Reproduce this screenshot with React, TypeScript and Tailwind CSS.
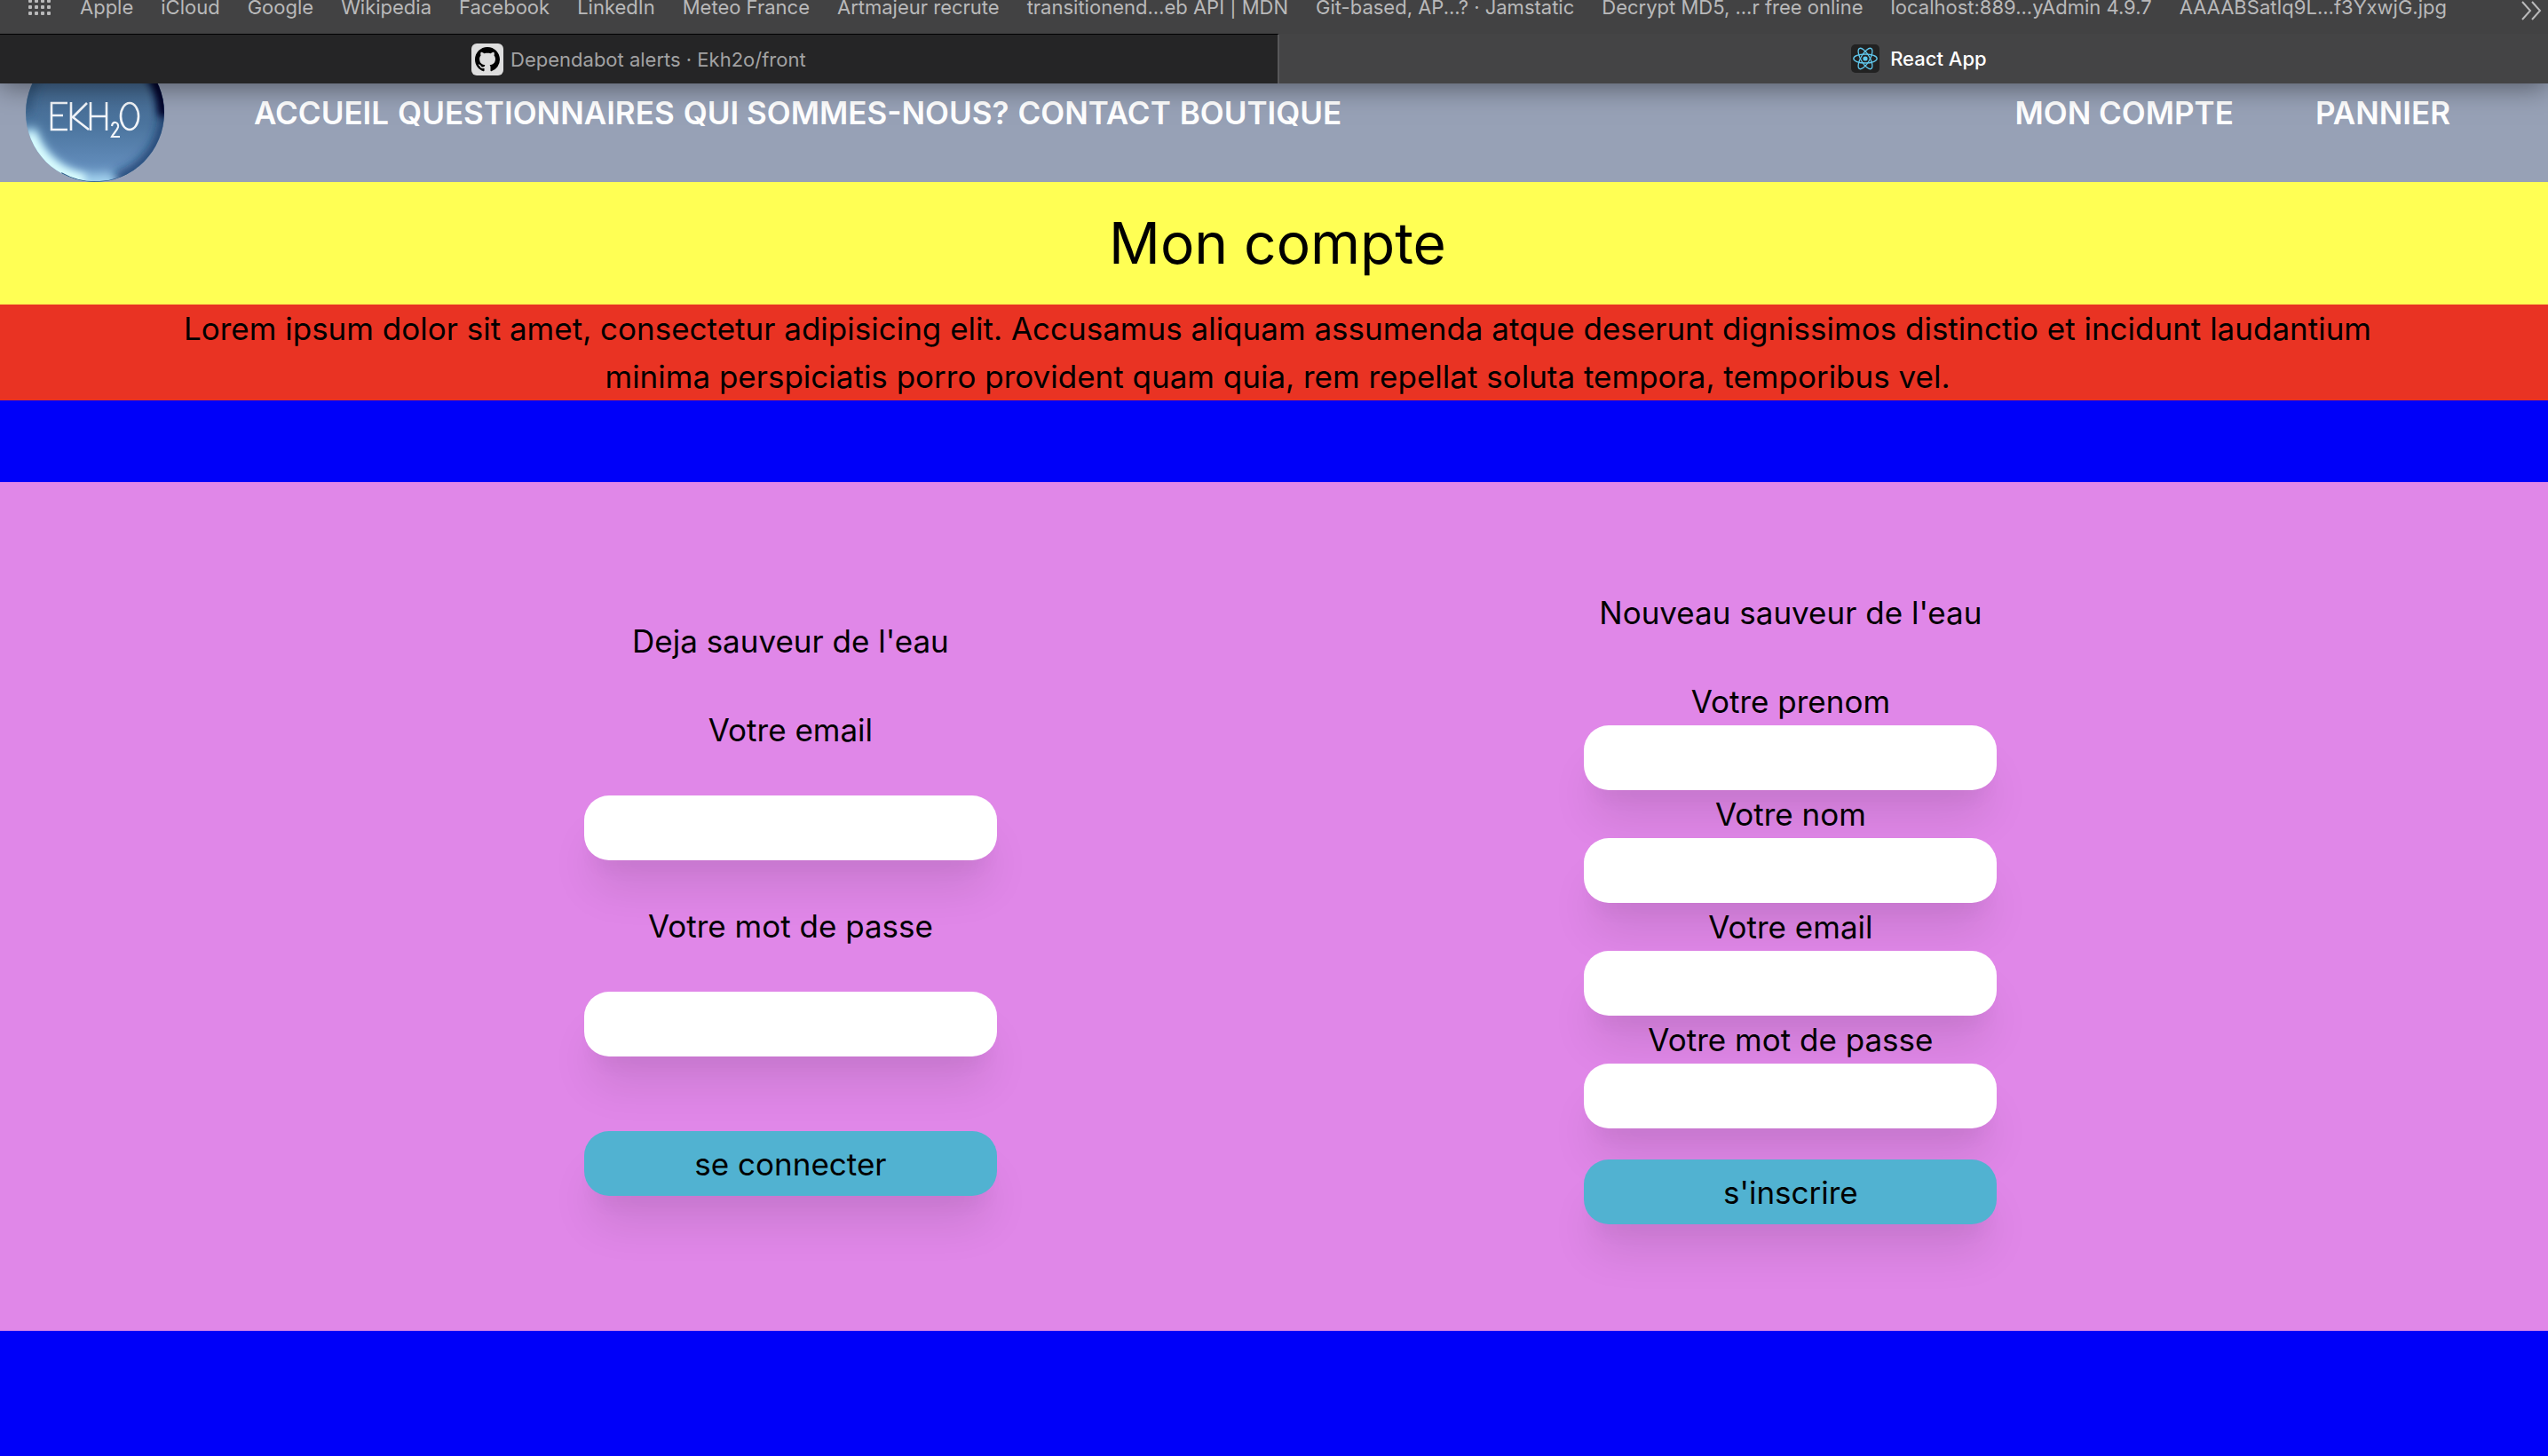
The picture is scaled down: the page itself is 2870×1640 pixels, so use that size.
import React from "react";

const bookmarks = [
  "Apple",
  "iCloud",
  "Google",
  "Wikipedia",
  "Facebook",
  "LinkedIn",
  "Meteo France",
  "Artmajeur recrute",
  "transitionend...eb API | MDN",
  "Git-based, AP...? · Jamstatic",
  "Decrypt MD5, ...r free online",
  "localhost:889...yAdmin 4.9.7",
  "AAAABSatIq9L...f3YxwjG.jpg",
];

const navLinks = ["ACCUEIL", "QUESTIONNAIRES", "QUI SOMMES-NOUS?", "CONTACT", "BOUTIQUE"];

const box =
  "h-[73px] w-full rounded-[28px] text-center shadow-[0_40px_50px_-10px_rgba(0,0,0,0.1),0_20px_20px_-10px_rgba(0,0,0,0.04)]";

function GridIcon() {
  const steps = [0, 7, 14, 21];
  return (
    <svg viewBox="0 0 26 26" className="size-[26px]" fill="#b9b9ba" aria-hidden="true">
      {steps.map((y) => steps.map((x) => <rect key={`${x}-${y}`} x={x} y={y} width="4" height="4" rx="1" />))}
    </svg>
  );
}

function GithubIcon() {
  return (
    <span className="flex size-9 items-center justify-center rounded-md bg-[#dedede]">
      <svg viewBox="0 0 16 16" className="size-7" fill="#000" aria-hidden="true">
        <path d="M8 0C3.58 0 0 3.58 0 8c0 3.54 2.29 6.53 5.47 7.59.4.07.55-.17.55-.38 0-.19-.01-.82-.01-1.49-2.01.37-2.53-.49-2.69-.94-.09-.23-.48-.94-.82-1.13-.28-.15-.68-.52-.01-.53.63-.01 1.08.58 1.23.82.72 1.21 1.87.87 2.33.66.07-.52.28-.87.51-1.07-1.78-.2-3.64-.89-3.64-3.95 0-.87.31-1.59.82-2.15-.08-.2-.36-1.02.08-2.12 0 0 .67-.21 2.2.82.64-.18 1.32-.27 2-.27s1.36.09 2 .27c1.53-1.04 2.2-.82 2.2-.82.44 1.1.16 1.92.08 2.12.51.56.82 1.27.82 2.15 0 3.07-1.87 3.75-3.65 3.95.29.25.54.73.54 1.48 0 1.07-.01 1.93-.01 2.2 0 .21.15.46.55.38A8.01 8.01 0 0 0 16 8c0-4.42-3.58-8-8-8z" />
      </svg>
    </span>
  );
}

function ReactIcon() {
  return (
    <span className="flex size-8 items-center justify-center rounded-[5px] bg-[#222222]">
      <svg viewBox="-14 -14 28 28" className="size-7" fill="none" stroke="#61c9ee" strokeWidth="1.3" aria-hidden="true">
        <circle r="2.6" fill="#61c9ee" stroke="none" />
        <ellipse rx="13.2" ry="5" />
        <ellipse rx="13.2" ry="5" transform="rotate(60)" />
        <ellipse rx="13.2" ry="5" transform="rotate(120)" />
      </svg>
    </span>
  );
}

function Logo() {
  return (
    <svg viewBox="0 0 156 156" className="size-[156px] shrink-0" role="img" aria-label="EKH2O">
      <defs>
        <clipPath id="drop">
          <circle cx="78" cy="78" r="78" />
        </clipPath>
        <linearGradient id="water" x1="0" y1="0" x2="0" y2="1">
          <stop offset="0.3" stopColor="#456a92" />
          <stop offset="0.6" stopColor="#4c759f" />
          <stop offset="1" stopColor="#6b96c6" />
        </linearGradient>
        <filter id="soft" x="-50%" y="-50%" width="200%" height="200%">
          <feGaussianBlur stdDeviation="6" />
        </filter>
        <filter id="softer" x="-50%" y="-50%" width="200%" height="200%">
          <feGaussianBlur stdDeviation="4" />
        </filter>
      </defs>
      <g clipPath="url(#drop)">
        <rect width="156" height="156" fill="url(#water)" />
        <path d="M0 78A78 78 0 0 1 40 10" fill="none" stroke="#2f5279" strokeWidth="10" filter="url(#soft)" />
        <path d="M134 20A80 80 0 0 1 100 153" fill="none" stroke="#123665" strokeWidth="10" filter="url(#soft)" />
        <path d="M130 20A80 80 0 0 1 156 82" fill="none" stroke="#020028" strokeWidth="15" filter="url(#softer)" />
        <path d="M2 96A78 78 0 0 0 100 154" fill="none" stroke="#a4d4ef" strokeWidth="20" filter="url(#soft)" />
        <path d="M4 102A78 78 0 0 0 66 154" fill="none" stroke="#dcffff" strokeWidth="13" filter="url(#softer)" />
        <path d="M40 146A78 78 0 0 0 125 141" fill="none" stroke="#24507e" strokeWidth="2" />
      </g>
      <g fill="none" stroke="#f2f5f9" strokeWidth="2.6">
        <path d="M47 67H29V97H47M29 81H42" />
        <path d="M51 66V98M69 67L53 83L71 97" />
        <path d="M73 66V98M91 66V98M73 82H91" />
        <ellipse cx="117" cy="82" rx="10" ry="15" />
        <path d="M97 93C98 87 105 88 104 94C103 98 99 101 97 105H106" strokeWidth="2.2" />
      </g>
    </svg>
  );
}

function BrowserChrome() {
  return (
    <div className="relative z-10 bg-[#444445] shadow-[0_2px_30px_rgba(0,0,0,0.5)]">
      <div className="flex h-[38px] items-start overflow-hidden bg-[#424243] pl-8 pr-1.5 text-[22px] leading-8 text-[#b9b9ba]">
        <div className="-mt-2 flex flex-1 items-start whitespace-nowrap">
          <button type="button" aria-label="Favoris" className="mr-8">
            <GridIcon />
          </button>
          <nav aria-label="Favoris" className="flex gap-[31px]">
            {bookmarks.map((name) => (
              <a key={name} href="#">
                {name}
              </a>
            ))}
          </nav>
        </div>
        <button type="button" aria-label="Plus de favoris">
          <svg viewBox="0 0 24 24" className="size-6" fill="none" stroke="#b9b9ba" strokeWidth="2" aria-hidden="true">
            <path d="M1 2L10 12L1 22M12 2L21 12L12 22" />
          </svg>
        </button>
      </div>
      <div className="flex text-[22px]">
        <button
          type="button"
          className="flex h-14 flex-1 items-center justify-center gap-2 border-r-2 border-t border-r-[#58585a] border-t-black bg-[#252526] text-[#a2a2a3]"
        >
          <GithubIcon />
          Dependabot alerts · Ekh2o/front
        </button>
        <button
          type="button"
          className="flex h-14 w-[49.8%] items-center justify-center gap-3 pl-3 font-medium text-white"
        >
          <ReactIcon />
          React App
        </button>
      </div>
    </div>
  );
}

function Field({ id, label, type }: { id: string; label: string; type: string }) {
  return (
    <>
      <label htmlFor={id}>{label}</label>
      <input id={id} type={type} className={box + " bg-white px-6"} />
    </>
  );
}

export default function App() {
  return (
    <div className="min-h-screen bg-[#0000f9] font-['Inter',sans-serif] text-[35px] leading-[54px] text-black">
      <BrowserChrome />
      <header className="-mt-[46px] flex h-[157px] items-center bg-[#97a1b6] pl-[29px] pr-[110px] font-semibold text-white">
        <Logo />
        <nav className="ml-[101px] flex flex-1 gap-2.5">
          {navLinks.map((name) => (
            <a key={name} href="#">
              {name}
            </a>
          ))}
        </nav>
        <nav className="flex gap-[92px]">
          <a href="#">MON COMPTE</a>
          <a href="#">PANNIER</a>
        </nav>
      </header>
      <main className="text-center">
        <h1 className="bg-[#ffff54] py-[33px] pl-2 text-[64px] leading-[72px]">Mon compte</h1>
        <p className="bg-[#e93323] pl-[188px] pr-[180px]">
          Lorem ipsum dolor sit amet, consectetur adipisicing elit. Accusamus aliquam assumenda atque deserunt
          dignissimos distinctio et incidunt laudantium minima perspiciatis porro provident quam quia, rem repellat
          soluta tempora, temporibus vel.
        </p>
        <div className="mt-[92px] grid grid-cols-2 items-center justify-items-center bg-[#e087e8] py-[120px] pl-[11.4%] pr-[10.1%]">
          <form className="flex w-[465px] flex-col">
            <h2 className="mb-[46px]">Deja sauveur de l'eau</h2>
            <label htmlFor="login-email">Votre email</label>
            <input id="login-email" type="email" className={box + " my-[47px] bg-white px-6"} />
            <label htmlFor="login-password">Votre mot de passe</label>
            <input id="login-password" type="password" className={box + " mb-[84px] mt-[47px] bg-white px-6"} />
            <button type="button" className={box + " bg-[#51b2d1]"}>
              se connecter
            </button>
          </form>
          <form className="flex w-[465px] flex-col">
            <h2 className="mb-[46px]">Nouveau sauveur de l'eau</h2>
            <Field id="first-name" label="Votre prenom" type="text" />
            <Field id="last-name" label="Votre nom" type="text" />
            <Field id="email" label="Votre email" type="email" />
            <Field id="password" label="Votre mot de passe" type="password" />
            <button type="button" className={box + " mt-[35px] bg-[#51b2d1]"}>
              s'inscrire
            </button>
          </form>
        </div>
      </main>
    </div>
  );
}
